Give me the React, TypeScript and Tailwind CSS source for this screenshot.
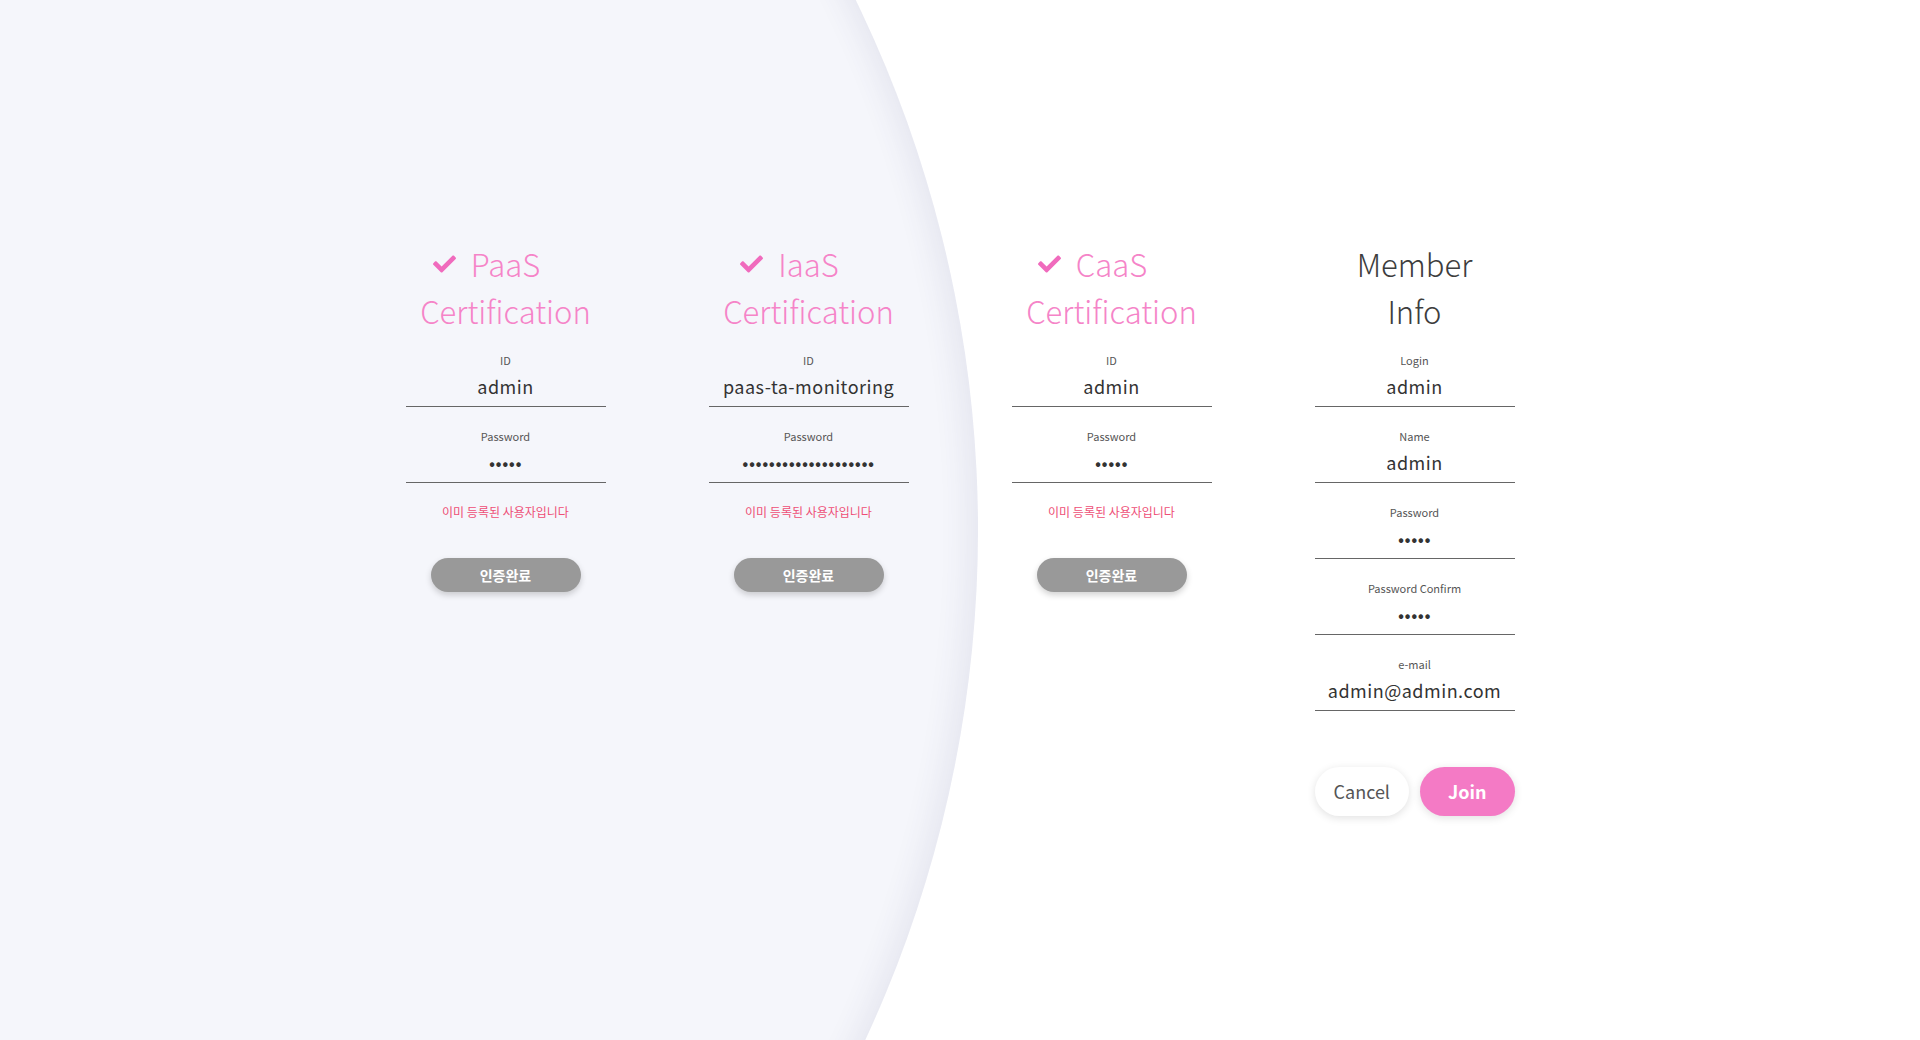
import React from "react";
import { FaCheck } from "react-icons/fa";

const FONT = { fontFamily: '"Noto Sans CJK KR", "Noto Sans", sans-serif' };
const LIGHT = { fontFamily: '"Noto Sans CJK KR Light", "Noto Sans CJK KR DemiLight", "Noto Sans CJK KR", "Noto Sans", sans-serif' };

function Field({ label, value, password }: { label: string; value: string; password?: boolean }) {
  return (
    <div className="flex w-full flex-col items-center">
      <div className="h-[14px] text-[11px] leading-[14px] text-[#555]">{label}</div>
      <input
        readOnly
        type={password ? "password" : "text"}
        value={value}
        className="mt-[4px] h-[36px] w-full border-b border-[#666] bg-transparent pb-[5px] text-center text-[18px] tracking-[0.5px] text-[#333] outline-none"
        style={FONT}
      />
    </div>
  );
}

function CertColumn({ name, id, pw }: { name: string; id: string; pw: string }) {
  return (
    <div className="flex w-[200px] flex-col items-center">
      <div className="flex flex-col items-center text-[31px] font-light leading-[47px] text-[#f584c8]" style={LIGHT}>
        <span className="relative">
          <FaCheck className="absolute right-full top-1/2 mr-[15px] -translate-y-1/2 text-[23px] text-[#f06bbd]" />
          {name}
        </span>
        <span>Certification</span>
      </div>
      <div className="mt-[19px] flex w-full flex-col gap-[22px]">
        <Field label="ID" value={id} />
        <Field label="Password" value={pw} password />
      </div>
      <div className="mt-[21px] h-[15px] text-[12px] leading-[15px] text-[#ee4e76]">이미 등록된 사용자입니다</div>
      <button className="mt-[39px] h-[34px] w-[150px] rounded-full bg-[#999999] text-[14px] font-bold text-white shadow-[0_3px_6px_rgba(0,0,0,0.18)]">
        인증완료
      </button>
    </div>
  );
}

export default function App() {
  return (
    <div className="relative h-[1040px] w-full overflow-hidden bg-white" style={FONT}>
      <div className="absolute left-[-1442px] top-[-680px] h-[2420px] w-[2420px] rounded-full bg-[#f5f6fb] shadow-[inset_-18px_0_28px_-6px_rgba(60,60,110,0.08)]" />
      <div className="relative flex justify-center gap-[103px] pt-[240px]">
        <CertColumn name="PaaS" id="admin" pw="admin" />
        <CertColumn name="IaaS" id="paas-ta-monitoring" pw="paastamonitoring1234" />
        <CertColumn name="CaaS" id="admin" pw="admin" />
        <div className="flex w-[200px] flex-col items-center">
          <div className="flex flex-col items-center text-[31px] font-light leading-[47px] text-[#3d3d3d]" style={LIGHT}>
            <span>Member</span>
            <span>Info</span>
          </div>
          <div className="mt-[19px] flex w-full flex-col gap-[22px]">
            <Field label="Login" value="admin" />
            <Field label="Name" value="admin" />
            <Field label="Password" value="admin" password />
            <Field label="Password Confirm" value="admin" password />
            <Field label="e-mail" value="admin@admin.com" />
          </div>
          <div className="mt-[56px] flex w-full gap-[11px]">
            <button className="h-[49px] flex-1 rounded-full bg-white text-[18px] text-[#555] shadow-[0_2px_8px_rgba(0,0,0,0.12)]">
              Cancel
            </button>
            <button className="h-[49px] flex-1 rounded-full bg-[#f47ac5] text-[18px] font-bold text-white shadow-[0_2px_8px_rgba(0,0,0,0.12)]">
              Join
            </button>
          </div>
        </div>
      </div>
    </div>
  );
}
